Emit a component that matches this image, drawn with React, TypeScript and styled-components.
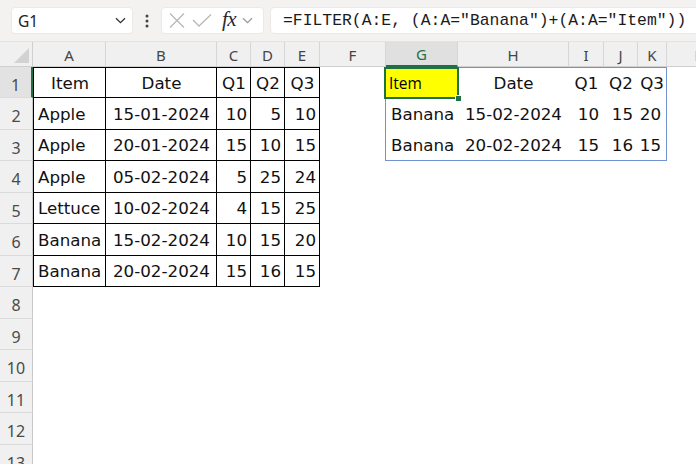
import React from "react";
import styled, { createGlobalStyle } from "styled-components";

type Align = "left" | "center" | "right";
type Value = string | number;

const GlobalStyle = createGlobalStyle`
    html, body {
        margin: 0;
        padding: 0;
        background: #fff;
    }

    body {
        width: 696px;
        height: 464px;
        overflow: hidden;
        font-family: "DejaVu Sans", Verdana, sans-serif;
    }
`;

const Window = styled.div`
    width: 696px;
    height: 464px;
    overflow: hidden;
    display: flex;
    flex-direction: column;
    background: #fff;
`;

const FormulaBar = styled.div`
    flex: none;
    height: 42px;
    box-sizing: border-box;
    display: flex;
    align-items: center;
    padding-left: 11px;
    background: #f3f2f0;
    border-bottom: 1px solid #e4e2df;
`;

const Box = styled.div`
    height: 27px;
    box-sizing: border-box;
    display: flex;
    align-items: center;
    background: #fff;
    border-radius: 4px;
    border: 1px solid #ebe9e6;
`;

const NameBox = styled(Box)`
    width: 122px;
    justify-content: space-between;
    padding: 0 6px 0 6px;
    font-family: "Noto Sans", "Open Sans", sans-serif;
    font-size: 15.5px;
    color: #222;
`;

const Dots = styled.div`
    width: 28px;
    display: flex;
    justify-content: center;
`;

const FunctionBox = styled(Box)`
    width: 103px;
    padding-left: 6px;
`;

const IconSlot = styled.div<{ $w: number }>`
    width: ${(p) => p.$w}px;
    height: 27px;
    display: flex;
    align-items: center;
    justify-content: center;
`;

const Fx = styled.span`
    font-family: "Liberation Serif", "DejaVu Serif", serif;
    font-style: italic;
    font-size: 21px;
    color: #2a2a2a;
    letter-spacing: -0.5px;
    margin-top: -2px;
`;

const FormulaInput = styled(Box)`
    flex: 1;
    margin-left: 6px;
    margin-right: -6px;
    padding-left: 12px;
    font-family: "Liberation Mono", "DejaVu Sans Mono", monospace;
    font-size: 16.4px;
    color: #1b1b1b;
    white-space: nowrap;
`;

const Sheet = styled.div`
    display: grid;
    grid-template-columns: 33px 73px 111px 34px 34px 35px 66px 72px 111px 35px 34px 29px 64px;
    grid-template-rows: 25px repeat(7, 31px 32px);
    background: #fff;
`;

const Corner = styled.div`
    box-sizing: border-box;
    background: #f0f0f0;
    border-right: 1px solid #cfcfcf;
    border-bottom: 1px solid #cfcfcf;
    display: flex;
    align-items: flex-end;
    justify-content: flex-end;
    padding: 0 3px 3px 0;
`;

const ColHeader = styled.div<{ $active?: boolean }>`
    box-sizing: border-box;
    display: flex;
    align-items: center;
    justify-content: center;
    padding-top: 1px;
    background: ${(p) => (p.$active ? "#e0e0e0" : "#f0f0f0")};
    border-right: 1px solid #d6d6d6;
    border-bottom: ${(p) => (p.$active ? "2px solid #1e7145" : "1px solid #cfcfcf")};
    font-family: "Noto Sans", "Open Sans", sans-serif;
    font-size: 15px;
    color: ${(p) => (p.$active ? "#1e7145" : "#454545")};
`;

const RowHeader = styled.div<{ $active?: boolean }>`
    box-sizing: border-box;
    display: flex;
    align-items: center;
    justify-content: center;
    padding-top: 5px;
    background: ${(p) => (p.$active ? "#e2e2e2" : "#f0f0f0")};
    border-right: ${(p) => (p.$active ? "2px solid #1e7145" : "1px solid #c9c9c9")};
    border-bottom: 1px solid #dadada;
    font-family: "Noto Sans", "Open Sans", sans-serif;
    font-size: 16px;
    color: #4a4a4a;
`;

const Cell = styled.div<{ $align?: Align }>`
    box-sizing: border-box;
    position: relative;
    min-width: 0;
    display: flex;
    align-items: center;
    justify-content: ${(p) =>
        p.$align === "right" ? "flex-end" : p.$align === "center" ? "center" : "flex-start"};
    padding: 0 3px 0 4px;
    font-size: 16.7px;
    color: #111;
    white-space: nowrap;
`;

const TableCell = styled(Cell)<{ $top: boolean; $lead: boolean }>`
    border-right: 1px solid #000;
    border-bottom: 1px solid #000;
    border-top: ${(p) => (p.$top ? "1px solid #000" : "none")};
    border-left: ${(p) => (p.$lead ? "1px solid #000" : "none")};
`;

const SpillCell = styled(Cell)<{ $top: boolean; $bottom: boolean; $lead: boolean; $end: boolean }>`
    padding: 0 5px 0 5px;
    border-top: ${(p) => (p.$top ? "1px solid #7193d2" : "none")};
    border-bottom: ${(p) => (p.$bottom ? "1px solid #7193d2" : "none")};
    border-right: ${(p) => (p.$end ? "1px solid #7193d2" : "none")};
    box-shadow: ${(p) => (p.$lead ? "-1px 0 0 #7193d2" : "none")};
`;

const ActiveCell = styled(SpillCell)`
    padding-left: 3px;
    background: #ffff00;
    font-family: "Open Sans", "Noto Sans", sans-serif;
    font-size: 15.5px;
    color: #000;
    z-index: 2;

    &::after {
        content: "";
        position: absolute;
        top: -1px;
        left: -2px;
        right: -1px;
        bottom: -1px;
        border: 2px solid #1e7145;
    }

    &::before {
        content: "";
        position: absolute;
        right: -4px;
        bottom: -4px;
        width: 5px;
        height: 5px;
        background: #1e7145;
        border: 1px solid #fff;
        z-index: 3;
    }
`;

const COLS = ["A", "B", "C", "D", "E", "F", "G", "H", "I", "J", "K", "L"];
const ROW_COUNT = 13;

const source: Value[][] = [
    ["Item", "Date", "Q1", "Q2", "Q3"],
    ["Apple", "15-01-2024", 10, 5, 10],
    ["Apple", "20-01-2024", 15, 10, 15],
    ["Apple", "05-02-2024", 5, 25, 24],
    ["Lettuce", "10-02-2024", 4, 15, 25],
    ["Banana", "15-02-2024", 10, 15, 20],
    ["Banana", "20-02-2024", 15, 16, 15],
];

// =FILTER(A:E, (A:A="Banana")+(A:A="Item"))
const spill = source.filter((r) => r[0] === "Banana" || r[0] === "Item");
const SPILL_COL = 6;

const alignFor = (row: number, col: number): Align => {
    if (row === 0) return "center";
    if (col === 0) return "left";
    if (col === 1) return "center";
    return "right";
};

const Chevron = ({ color }: { color: string }): React.ReactElement => (
    <svg width="11" height="7" viewBox="0 0 11 7">
        <path d="M1 1.2 L5.5 5.6 L10 1.2" fill="none" stroke={color} strokeWidth="1.3" />
    </svg>
);

const renderCell = (row: number, col: number): React.ReactElement => {
    const key = `${row}-${col}`;
    if (col < 5 && row < source.length) {
        return (
            <TableCell key={key} $align={alignFor(row, col)} $top={row === 0} $lead={col === 0}>
                {source[row][col]}
            </TableCell>
        );
    }
    const sc = col - SPILL_COL;
    if (sc >= 0 && sc < 5 && row < spill.length) {
        const edges = {
            $top: row === 0,
            $bottom: row === spill.length - 1,
            $lead: sc === 0,
            $end: sc === 4,
        };
        if (row === 0 && sc === 0) {
            return (
                <ActiveCell key={key} $align="left" {...edges}>
                    {spill[row][sc]}
                </ActiveCell>
            );
        }
        const align: Align = sc === 0 ? "left" : row === 0 || sc === 1 ? "center" : "right";
        return (
            <SpillCell key={key} $align={align} {...edges}>
                {spill[row][sc]}
            </SpillCell>
        );
    }
    return <Cell key={key} />;
};

const App: React.FC = (): React.ReactElement => {
    return (
        <Window>
            <GlobalStyle />
            <FormulaBar>
                <NameBox>
                    <span>G1</span>
                    <Chevron color="#333" />
                </NameBox>
                <Dots>
                    <svg width="4" height="14" viewBox="0 0 4 14">
                        <circle cx="2" cy="2" r="1.5" fill="#444" />
                        <circle cx="2" cy="7" r="1.5" fill="#444" />
                        <circle cx="2" cy="12" r="1.5" fill="#444" />
                    </svg>
                </Dots>
                <FunctionBox>
                    <IconSlot $w={17}>
                        <svg width="16" height="15" viewBox="0 0 16 15">
                            <path d="M1 0.5 L15 14.5 M15 0.5 L1 14.5" stroke="#b8b8b8" strokeWidth="1.3" />
                        </svg>
                    </IconSlot>
                    <IconSlot $w={34}>
                        <svg width="20" height="13" viewBox="0 0 20 13">
                            <path d="M1 6 L7 12 L19 0.5" fill="none" stroke="#b8b8b8" strokeWidth="1.3" />
                        </svg>
                    </IconSlot>
                    <IconSlot $w={20}>
                        <Fx>fx</Fx>
                    </IconSlot>
                    <IconSlot $w={16}>
                        <Chevron color="#9a9a9a" />
                    </IconSlot>
                </FunctionBox>
                <FormulaInput>=FILTER(A:E, (A:A="Banana")+(A:A="Item"))</FormulaInput>
            </FormulaBar>
            <Sheet>
                <Corner>
                    <svg width="15" height="15" viewBox="0 0 15 15">
                        <path d="M15 0 L15 15 L0 15 Z" fill="#d2d2d2" />
                    </svg>
                </Corner>
                {COLS.map((c, i) => (
                    <ColHeader key={c} $active={i === SPILL_COL}>
                        {c}
                    </ColHeader>
                ))}
                {Array.from({ length: ROW_COUNT }, (_, row) => (
                    <React.Fragment key={row}>
                        <RowHeader $active={row === 0}>{row + 1}</RowHeader>
                        {COLS.map((_c, col) => renderCell(row, col))}
                    </React.Fragment>
                ))}
            </Sheet>
        </Window>
    );
};

export default App;
